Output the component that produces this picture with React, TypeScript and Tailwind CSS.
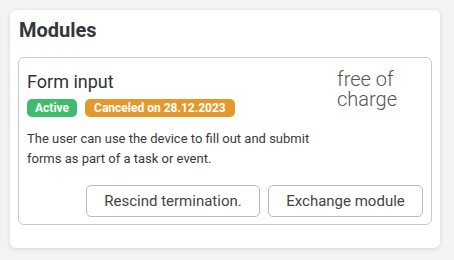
export default function App() {
  return (
    <div className="min-h-[260px] w-[454px] bg-[#f2f3f5] p-[10px] font-['Roboto',sans-serif]">
      <div className="flex h-[238px] w-[430px] flex-col rounded-[6px] bg-white px-[8px] pt-[8px] shadow-[0_1px_4px_rgba(0,0,0,0.12)]">
        <h2 className="mb-[15px] pl-[1px] text-[20px] leading-[24px] font-bold text-[#35363a]">Modules</h2>
        <div className="flex flex-col rounded-[6px] border border-[#c9c9c9] px-[8px] pt-[13px] pb-[7px]">
          <div className="flex justify-between">
            <div className="flex w-[300px] flex-col">
              <div className="text-[18px] leading-[22px] text-[#333]">Form input</div>
              <div className="mt-[6px] flex gap-[8px]">
                <span className="rounded-[5px] bg-[#3fbc6b] px-[8px] text-[12px] leading-[18px] font-bold text-white">Active</span>
                <span className="rounded-[5px] bg-[#e4992c] px-[9px] text-[12px] leading-[18px] font-bold text-white">Canceled on 28.12.2023</span>
              </div>
              <p className="mt-[12px] text-[13px] leading-[20px] text-[#3a3a3a]">
                The user can use the device to fill out and submit forms as part of a task or event.
              </p>
            </div>
            <div className="-mt-[2px] w-[86px] text-[20px] leading-[20px] font-light text-[#555]">free of charge</div>
          </div>
          <div className="mt-[16px] flex justify-end gap-[8px]">
            <button className="h-[32px] w-[174px] rounded-[5px] border border-[#bdbdbd] bg-white text-[15px] text-[#444]">Rescind termination.</button>
            <button className="h-[32px] w-[155px] rounded-[5px] border border-[#bdbdbd] bg-white text-[15px] text-[#444]">Exchange module</button>
          </div>
        </div>
      </div>
    </div>
  )
}
